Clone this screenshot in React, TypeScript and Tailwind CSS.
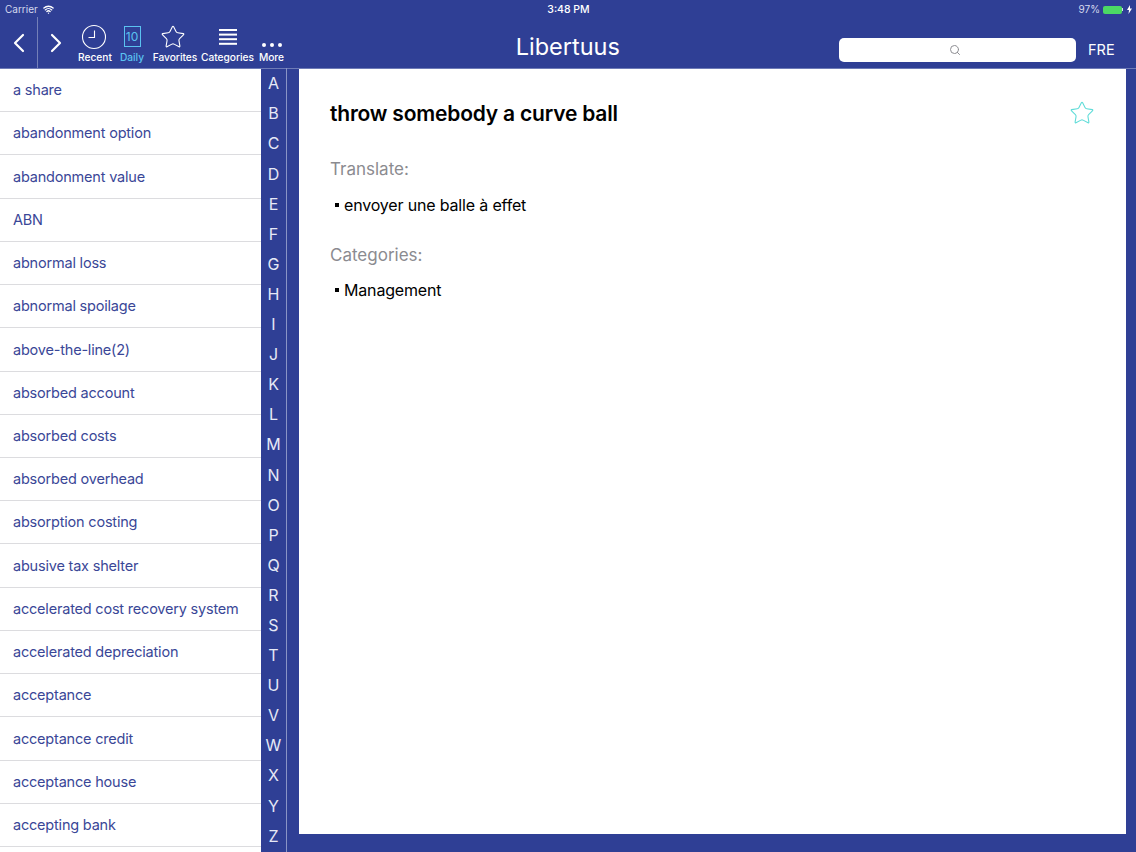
import type { ReactNode } from 'react';
import { ChevronLeft, ChevronRight, Search, Star, Wifi } from 'lucide-react';

const terms = [
  'a share',
  'abandonment option',
  'abandonment value',
  'ABN',
  'abnormal loss',
  'abnormal spoilage',
  'above-the-line(2)',
  'absorbed account',
  'absorbed costs',
  'absorbed overhead',
  'absorption costing',
  'abusive tax shelter',
  'accelerated cost recovery system',
  'accelerated depreciation',
  'acceptance',
  'acceptance credit',
  'acceptance house',
  'accepting bank',
];

const letters = 'ABCDEFGHIJKLMNOPQRSTUVWXYZ'.split('');

function ClockIcon() {
  return (
    <svg width="26" height="26" viewBox="0 0 26 26" fill="none" stroke="currentColor" strokeWidth="1.1" className="mr-[2px]">
      <circle cx="13" cy="13" r="11.5" />
      <path d="M13.5 6.5V13.5H7.5" />
    </svg>
  );
}

function MenuIcon() {
  return (
    <svg width="18" height="16" viewBox="0 0 18 16" fill="currentColor">
      <rect y="0" width="18" height="2" />
      <rect y="4.6" width="18" height="2" />
      <rect y="9.2" width="18" height="2" />
      <rect y="13.8" width="18" height="2" />
    </svg>
  );
}

function DotsIcon() {
  return (
    <svg width="22" height="6" viewBox="0 0 22 6" fill="currentColor">
      <circle cx="3" cy="3" r="2" />
      <circle cx="11" cy="3" r="2" />
      <circle cx="19" cy="3" r="2" />
    </svg>
  );
}

function StatusBar() {
  return (
    <div className="h-[17px] pt-[2px] flex items-center justify-between pl-[5px] pr-[4px] text-[10px] text-[#d5d9ee]">
      <div className="w-[200px] flex items-center gap-[5px]">
        <span>Carrier</span>
        <Wifi size={11} strokeWidth={3} className="text-white" />
      </div>
      <span className="text-[10.5px] font-medium text-white">3:48 PM</span>
      <div className="w-[200px] flex items-center justify-end gap-[3px]">
        <span>97%</span>
        <div className="flex items-center">
          <div className="w-[19px] h-[8px] rounded-[2px] bg-[#4cd964]" />
          <div className="w-[1px] h-[3px] bg-[#d5d9ee]" />
        </div>
        <svg width="5" height="9" viewBox="0 0 5 9" fill="white" className="ml-[1px]">
          <path d="M3 0 0 5h2L1.500 9 5 3.500H3Z" />
        </svg>
      </div>
    </div>
  );
}

function ToolItem({ label, width, active, children }: { label: string; width: string; active?: boolean; children: ReactNode }) {
  return (
    <div className={`${width} flex flex-col items-center ${active ? 'text-[#5ac2f0]' : 'text-white'}`}>
      <div className="h-[29px] flex items-center justify-center">{children}</div>
      <span className="text-[10.2px] leading-[13px] font-medium whitespace-nowrap">{label}</span>
    </div>
  );
}

function Toolbar() {
  return (
    <div className="h-[51px] flex items-center text-white">
      <div className="w-[37px] h-full flex items-center justify-center">
        <ChevronLeft size={32} strokeWidth={1.6} />
      </div>
      <div className="w-px h-full bg-[#7480b8]" />
      <div className="w-[36px] h-full flex items-center justify-center">
        <ChevronRight size={32} strokeWidth={1.6} />
      </div>
      <div className="flex items-start h-full pt-[5px] ml-[1px]">
        <ToolItem label="Recent" width="w-[40px]"><ClockIcon /></ToolItem>
        <ToolItem label="Daily" width="w-[34px]" active>
          <div className="w-[17px] h-[21px] border border-[#5ac2f0] flex items-center justify-center text-[12px] leading-none">10</div>
        </ToolItem>
        <ToolItem label="Favorites" width="w-[46px] ml-[3px]">
          <Star size={26} strokeWidth={1} className="mr-[4px]" />
        </ToolItem>
        <ToolItem label="Categories" width="w-[54px] ml-[2.5px]"><MenuIcon /></ToolItem>
        <ToolItem label="More" width="w-[28px] ml-[3px]">
          <div className="pt-[16px]"><DotsIcon /></div>
        </ToolItem>
      </div>
      <div className="flex-1 text-center text-[23.5px] font-normal pl-[13px] ml-[-2px] mt-[8px]">Libertuus</div>
      <div className="w-[237px] h-[24px] mt-[14px] rounded-[5px] bg-white flex items-center justify-center pr-[6px]">
        <Search size={12} className="text-[#8e8e93]" />
      </div>
      <div className="w-[60px] pl-[12px] mt-[15px] text-[14.5px]">FRE</div>
    </div>
  );
}

function TermList() {
  return (
    <div className="w-[261px] bg-white overflow-hidden">
      {terms.map((term) => (
        <div key={term} className="h-[43.22px] flex items-center pl-[13px] border-b border-[#dcdcdf] text-[14.5px] tracking-[-0.2px] text-[#3a4797] whitespace-nowrap">
          {term}
        </div>
      ))}
    </div>
  );
}

function AlphabetIndex() {
  return (
    <div className="w-[26px] -mt-[0.75px] border-r border-[#8a94c6] text-[#e6e9f6]">
      {letters.map((l) => (
        <div key={l} className="h-[30.1px] flex items-center justify-center text-[16px]">{l}</div>
      ))}
    </div>
  );
}

function Bullet({ children }: { children: ReactNode }) {
  return (
    <div className="flex items-center pl-[5px] text-[16px] leading-[24px] tracking-[-0.17px] text-black">
      <span className="w-[3.5px] h-[3.5px] bg-black mr-[5.5px]" />
      {children}
    </div>
  );
}

function Detail() {
  return (
    <div className="flex-1 pl-[12px] pr-[10px] pb-[18px]">
      <div className="h-full bg-white relative pl-[31px] pt-[31px]">
        <h1 className="text-[21px] leading-[28px] tracking-[-0.2px] font-semibold text-black">throw somebody a curve ball</h1>
        <Star size={26} strokeWidth={1} className="absolute top-[31px] right-[31px] text-[#5fdcd8]" />
        <p className="mt-[29px] text-[17px] leading-[24px] text-[#8b8b90]">Translate:</p>
        <div className="mt-[12px]"><Bullet>envoyer une balle à effet</Bullet></div>
        <p className="mt-[26px] text-[17px] leading-[24px] text-[#8b8b90]">Categories:</p>
        <div className="mt-[11px]"><Bullet>Management</Bullet></div>
      </div>
    </div>
  );
}

export default function App() {
  return (
    <div className="w-[1136px] h-[852px] overflow-hidden flex flex-col bg-[#2f3f95] font-['Inter',sans-serif]">
      <div className="h-[69px] border-b border-[#6e7bb6]">
        <StatusBar />
        <Toolbar />
      </div>
      <div className="flex-1 flex min-h-0">
        <TermList />
        <AlphabetIndex />
        <Detail />
      </div>
    </div>
  );
}
